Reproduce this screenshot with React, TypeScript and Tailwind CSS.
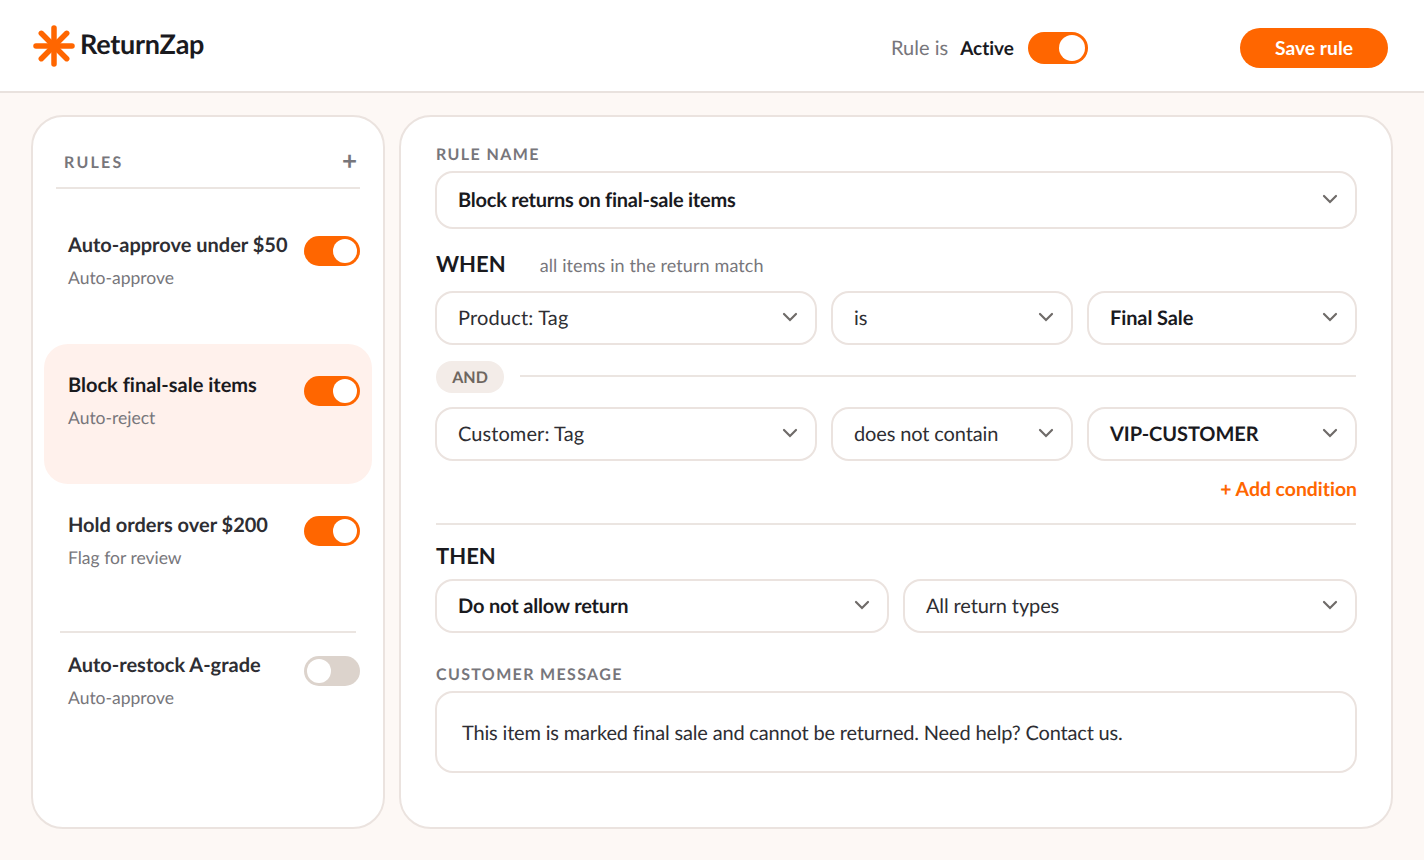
import React from "react";

function Toggle({ on = true, big = false }: { on?: boolean; big?: boolean }) {
  return (
    <div
      className={`flex shrink-0 items-center rounded-full p-[3px] ${big ? "h-8 w-[60px]" : "h-[30px] w-14"} ${on ? "justify-end bg-[#ff6600]" : "justify-start bg-[#dcd3cc]"}`}
    >
      <div className={`rounded-full bg-white ${big ? "h-[26px] w-[26px]" : "h-6 w-6"}`} />
    </div>
  );
}

function Chevron() {
  return (
    <svg width="16" height="16" viewBox="0 0 16 16" fill="none" className="mb-0.5 shrink-0">
      <path d="M2 5L8 11L14 5" stroke="#6f6b69" strokeWidth="2.2" strokeLinecap="round" />
    </svg>
  );
}

function Select({ label, bold = false, className = "", h = "h-[54px]", text = "" }: { label: string; bold?: boolean; className?: string; h?: string; text?: string }) {
  return (
    <div className={`flex items-center justify-between rounded-[18px] border-2 border-[#ebe3df] bg-white pl-[21px] pr-[17px] ${h} ${className}`}>
      <span className={`text-[20px] leading-none ${bold ? "font-bold text-[#1a1a1e]" : "text-[#2e2e33]"} ${text}`}>{label}</span>
      <Chevron />
    </div>
  );
}

function Rule({ title, sub, on = true, active = false, divider = false }: { title: string; sub: string; on?: boolean; active?: boolean; divider?: boolean }) {
  return (
    <div className={`relative flex h-[140px] justify-between rounded-[24px] pl-6 pr-3 ${active ? "bg-[#fff1ec]" : ""}`}>
      {divider && <div className="absolute left-4 right-4 top-[7px] h-0.5 bg-[#ebe5e1]" />}
      <div className="pt-[26px]">
        <div className={`text-[20px] font-bold leading-[30px] ${active ? "text-[#1a1a1e]" : "text-[#2e2e33]"}`}>{title}</div>
        <div className="mt-[5px] text-[17.5px] leading-[26px] text-[#77767b]">{sub}</div>
      </div>
      <div className="pt-8">
        <Toggle on={on} />
      </div>
    </div>
  );
}

export default function App() {
  return (
    <div className="relative flex h-[860px] w-[1424px] flex-col overflow-hidden bg-[#fdf8f5] font-['Lato',sans-serif] [font-variant-ligatures:none] [text-rendering:geometricPrecision]">
      <header className="flex h-[93px] shrink-0 items-center border-b-2 border-[#e9e2de] bg-white pl-[33px] pr-9">
        <svg width="42" height="42" viewBox="0 0 42 42" className="shrink-0">
          <g stroke="#ff6600" strokeWidth="5.5" strokeLinecap="round">
            <path d="M21 3V39" />
            <path d="M3 21H39" />
            <path d="M8.3 8.3L33.7 33.7" />
            <path d="M33.7 8.3L8.3 33.7" />
          </g>
        </svg>
        <span className="ml-[5px] -translate-y-[2px] text-[27px] font-bold leading-none tracking-[-0.25px] text-[#1a1a1e]">ReturnZap</span>
        <div className="ml-auto flex translate-y-[2px] items-center">
          <span className="text-[20px] text-[#77767b]">Rule is</span>
          <span className="ml-3 translate-y-[2px] text-[19px] font-bold text-[#1a1a1e]">Active</span>
          <div className="ml-[14px]"><Toggle big /></div>
        </div>
        <button className="ml-[152px] flex h-10 w-[148px] translate-y-[2px] items-center justify-center rounded-full bg-[#ff6600] pt-0.5 text-[19.3px] font-bold text-white">Save rule</button>
      </header>
      <main className="flex gap-[14px] pl-[31px] pt-[22px]">
        <aside className="flex h-[714px] w-[354px] flex-col rounded-[32px] border-2 border-[#ebe3df] bg-white px-[11px]">
          <div className="mx-[12px] flex h-[72px] items-center justify-between border-b-2 border-[#ebe5e1] pl-2 pr-0 pt-[18px]">
            <span className="translate-y-[2px] text-[16px] font-bold tracking-[2.2px] text-[#77767b]">RULES</span>
            <span className="mb-0.5 mr-[3px] text-[26px] font-bold leading-none text-[#77767b]">+</span>
          </div>
          <div className="mt-[15px]">
            <Rule title="Auto-approve under $50" sub="Auto-approve" />
            <Rule title="Block final-sale items" sub="Auto-reject" active />
            <Rule title="Hold orders over $200" sub="Flag for review" />
            <Rule title="Auto-restock A-grade" sub="Auto-approve" on={false} divider />
          </div>
        </aside>
        <section className="flex h-[714px] w-[994px] flex-col rounded-[32px] border-2 border-[#ebe3df] bg-white pl-[34px] pr-[34px] pt-[28px]">
          <div className="ml-px text-[16px] font-bold leading-5 tracking-[1.4px] text-[#77767b]">RULE NAME</div>
          <Select label="Block returns on final-sale items" bold h="h-[58px]" className="mt-1.5" text="tracking-[-0.24px]" />
          <div className="ml-px mt-[22px] flex h-[26px] items-center">
            <span className="text-[22px] font-bold leading-none text-[#1a1a1e]">WHEN</span>
            <span className="ml-[34px] pt-[2px] text-[18px] tracking-[0.1px] text-[#77767b]">all items in the return match</span>
          </div>
          <div className="mt-[14px] flex gap-[14px]">
            <Select label="Product: Tag" className="w-[382px]" text="tracking-[0.17px]" />
            <Select label="is" className="w-[242px]" />
            <Select label="Final Sale" bold className="flex-1" text="tracking-[-0.1px]" />
          </div>
          <div className="mx-px mt-[16px] flex items-center">
            <span className="flex h-8 w-[68px] items-center justify-center rounded-full bg-[#f3ece8] pt-0.5 text-[16px] font-bold text-[#6e6660]">AND</span>
            <div className="ml-4 h-0.5 flex-1 -translate-y-px bg-[#ebe5e1]" />
          </div>
          <div className="mt-[14px] flex gap-[14px]">
            <Select label="Customer: Tag" className="w-[382px]" text="tracking-[0.08px]" />
            <Select label="does not contain" className="w-[242px]" text="tracking-[-0.13px]" />
            <Select label="VIP-CUSTOMER" bold className="flex-1" text="tracking-[-0.08px]" />
          </div>
          <div className="mt-[17px] text-right text-[19.4px] font-bold leading-6 text-[#ff6600]">+ Add condition</div>
          <div className="mx-px mt-[21px] h-0.5 bg-[#ebe5e1]" />
          <div className="ml-px mt-[18px] text-[22px] font-bold leading-[26px] text-[#1a1a1e]">THEN</div>
          <div className="mt-[10px] flex gap-[14px]">
            <Select label="Do not allow return" bold className="w-[454px]" text="tracking-[-0.16px]" />
            <Select label="All return types" className="flex-1" text="tracking-[-0.13px]" />
          </div>
          <div className="ml-px mt-8 text-[16px] font-bold leading-5 tracking-[1.35px] text-[#77767b]">CUSTOMER MESSAGE</div>
          <div className="mt-1.5 flex h-[82px] items-center rounded-[18px] border-2 border-[#ebe3df] pl-[25px] text-[20px] tracking-[-0.17px] text-[#2e2e33]">
            <span className="pt-0.5">This item is marked final sale and cannot be returned. Need help? Contact us.</span>
          </div>
        </section>
      </main>
    </div>
  );
}
